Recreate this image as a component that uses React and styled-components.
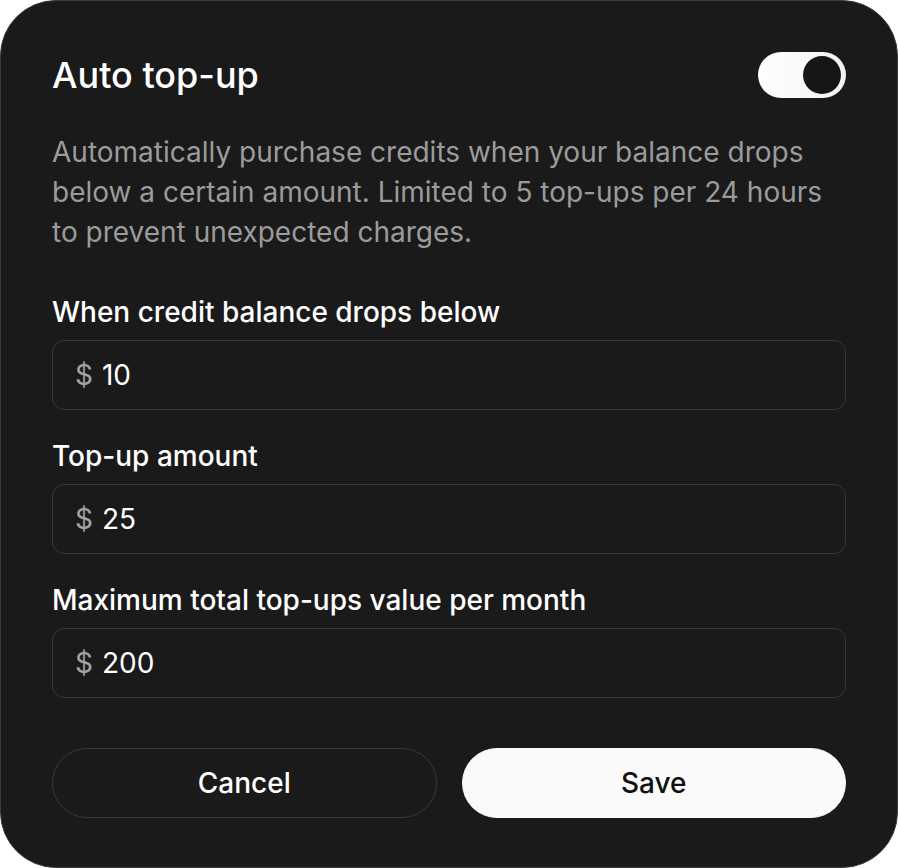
import React from "react";
import styled, { createGlobalStyle } from "styled-components";

const GlobalStyle = createGlobalStyle`
  html, body {
    margin: 0;
    padding: 0;
    background: #ffffff;
  }
  * {
    box-sizing: border-box;
  }
`;

const Card = styled.section`
  width: 898px;
  height: 868px;
  background-color: #1a1a1a;
  border: 1.5px solid #3c3c3c;
  border-radius: 56px;
  padding: 51px 51px 49px;
  font-family: Inter, "Liberation Sans", sans-serif;
  color: #ffffff;
  display: flex;
  flex-direction: column;
`;

const Header = styled.header`
  display: flex;
  align-items: center;
  justify-content: space-between;
  height: 46px;

  h1 {
    margin: 0;
    font-size: 36px;
    font-weight: 500;
  }
`;

const Toggle = styled.button`
  position: relative;
  width: 88px;
  height: 46px;
  border: none;
  border-radius: 23px;
  padding: 0;
  background: linear-gradient(90deg, #ffffff 0%, #f2f2f2 100%);
  cursor: pointer;

  &::after {
    content: "";
    position: absolute;
    top: 4px;
    right: 5px;
    width: 38px;
    height: 38px;
    border-radius: 50%;
    background: #161616;
  }
`;

const Description = styled.p`
  margin: 34px 0 42px;
  font-size: 28px;
  line-height: 40px;
  color: #9b9b9b;
`;

const Fields = styled.div`
  display: flex;
  flex-direction: column;
  gap: 28px;
`;

const Field = styled.label`
  display: flex;
  flex-direction: column;
  gap: 10px;

  span.label {
    font-size: 28px;
    line-height: 36px;
    font-weight: 500;
    color: #ffffff;
  }
`;

const InputBox = styled.div`
  display: flex;
  align-items: center;
  gap: 9px;
  height: 70px;
  padding: 0 22px;
  border: 1.5px solid #363636;
  border-radius: 12px;
  background: #1a1a1a;
  font-size: 28px;

  .currency {
    color: #a3a3a3;
  }
  .value {
    color: #ffffff;
  }
`;

const Actions = styled.div`
  margin-top: auto;
  display: grid;
  grid-template-columns: 1fr 1fr;
  gap: 25px;
`;

const Button = styled.button`
  height: 70px;
  border-radius: 35px;
  font-family: Inter, "Liberation Sans", sans-serif;
  font-size: 28px;
  font-weight: 500;
  cursor: pointer;
  border: 1.5px solid ${(p) => (p.$primary ? "#fafafa" : "#393939")};
  background: ${(p) => (p.$primary ? "#fafafa" : "transparent")};
  color: ${(p) => (p.$primary ? "#111111" : "#ffffff")};
`;

const fields = [
  { label: "When credit balance drops below", value: "10" },
  { label: "Top-up amount", value: "25" },
  { label: "Maximum total top-ups value per month", value: "200" },
];

const App = () => {
  return (
    <>
      <GlobalStyle />
      <Card>
        <Header>
          <h1>Auto top-up</h1>
          <Toggle aria-label="Toggle auto top-up" />
        </Header>
        <Description>
          Automatically purchase credits when your balance drops below a
          certain amount. Limited to 5 top-ups per 24 hours to prevent
          unexpected charges.
        </Description>
        <Fields>
          {fields.map((f) => (
            <Field key={f.label}>
              <span className="label">{f.label}</span>
              <InputBox>
                <span className="currency">$</span>
                <span className="value">{f.value}</span>
              </InputBox>
            </Field>
          ))}
        </Fields>
        <Actions>
          <Button>Cancel</Button>
          <Button $primary>Save</Button>
        </Actions>
      </Card>
    </>
  );
};

export default App;
